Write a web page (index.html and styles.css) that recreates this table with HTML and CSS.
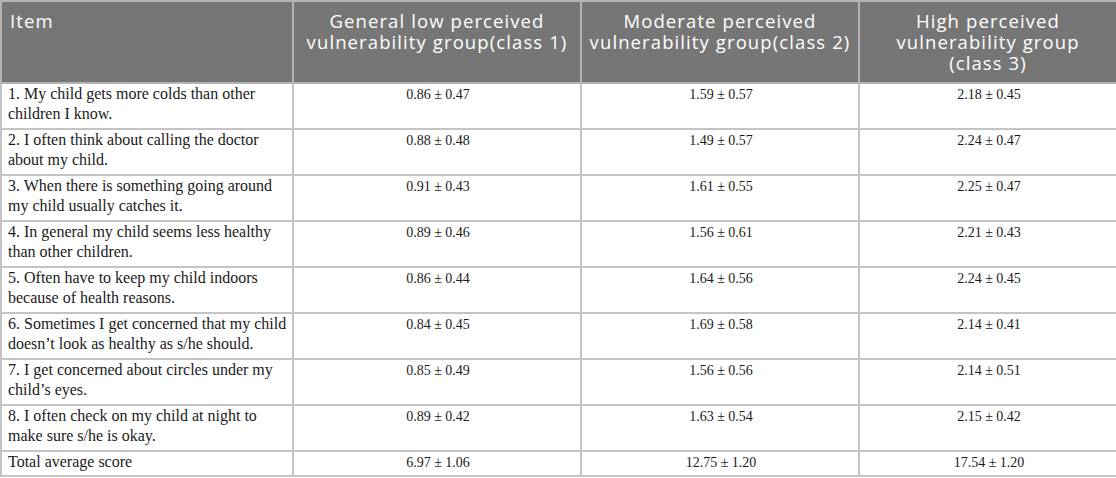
FILE: index.html
```html
<!DOCTYPE html>
<html>
<head>
<meta charset="utf-8">
<link rel="stylesheet" href="styles.css">
</head>
<body>
<table class="data">
  <colgroup>
    <col class="c1"><col class="c2"><col class="c3"><col class="c4">
  </colgroup>
  <thead>
    <tr>
      <th class="left">Item</th>
      <th>General low perceived vulnerability group(class 1)</th>
      <th>Moderate perceived vulnerability group(class 2)</th>
      <th class="narrow">High perceived vulnerability group (class 3)</th>
    </tr>
  </thead>
  <tbody>
    <tr><td class="item">1. My child gets more colds than other children I know.</td><td class="num">0.86 ± 0.47</td><td class="num">1.59 ± 0.57</td><td class="num">2.18 ± 0.45</td></tr>
    <tr><td class="item">2. I often think about calling the doctor about my child.</td><td class="num">0.88 ± 0.48</td><td class="num">1.49 ± 0.57</td><td class="num">2.24 ± 0.47</td></tr>
    <tr><td class="item">3. When there is something going around my child usually catches it.</td><td class="num">0.91 ± 0.43</td><td class="num">1.61 ± 0.55</td><td class="num">2.25 ± 0.47</td></tr>
    <tr><td class="item">4. In general my child seems less healthy than other children.</td><td class="num">0.89 ± 0.46</td><td class="num">1.56 ± 0.61</td><td class="num">2.21 ± 0.43</td></tr>
    <tr><td class="item">5. Often have to keep my child indoors because of health reasons.</td><td class="num">0.86 ± 0.44</td><td class="num">1.64 ± 0.56</td><td class="num">2.24 ± 0.45</td></tr>
    <tr><td class="item">6. Sometimes I get concerned that my child doesn’t look as healthy as s/he should.</td><td class="num">0.84 ± 0.45</td><td class="num">1.69 ± 0.58</td><td class="num">2.14 ± 0.41</td></tr>
    <tr><td class="item">7. I get concerned about circles under my child’s eyes.</td><td class="num">0.85 ± 0.49</td><td class="num">1.56 ± 0.56</td><td class="num">2.14 ± 0.51</td></tr>
    <tr><td class="item">8. I often check on my child at night to make sure s/he is okay.</td><td class="num">0.89 ± 0.42</td><td class="num">1.63 ± 0.54</td><td class="num">2.15 ± 0.42</td></tr>
    <tr class="total"><td class="item">Total average score</td><td class="num">6.97 ± 1.06</td><td class="num">12.75 ± 1.20</td><td class="num">17.54 ± 1.20</td></tr>
  </tbody>
</table>
</body>
</html>
```
FILE: styles.css
```css
html, body {
  margin: 0;
  padding: 0;
  background: #ffffff;
}

.data {
  width: 1116px;
  table-layout: fixed;
  border-collapse: collapse;
  border: 2px solid #bdbdbd;
}

.c1 { width: 292px; }
.c2 { width: 288px; }
.c3 { width: 278px; }
.c4 { width: 258px; }

.data th {
  background: #767676;
  color: #ffffff;
  font-family: "Open Sans", sans-serif;
  font-weight: 400;
  font-size: 18.5px;
  letter-spacing: 1.1px;
  line-height: 21px;
  text-align: center;
  vertical-align: top;
  padding: 8px 4px 0 4px;
  height: 72px;
  border: 2px solid #b4b4b4;
}

.data th.left {
  text-align: left;
  padding-left: 8px;
}

.data th.narrow {
  padding-left: 14px;
  padding-right: 14px;
}

.data td {
  border: 2px solid #c4c4c4;
  vertical-align: top;
  padding: 0 4px 0 6px;
  height: 44px;
  color: #1a1a1a;
}

.data td.item {
  font-family: "Liberation Serif", serif;
  font-size: 16px;
  line-height: 20px;
  text-align: left;
}

.data td.num {
  font-family: "Liberation Serif", serif;
  font-size: 14px;
  line-height: 20px;
  padding-top: 1px;
  height: 43px;
  text-align: center;
}

.data tr.total td {
  height: 23px;
}

.data tr.total td.num {
  height: 22px;
}
```
